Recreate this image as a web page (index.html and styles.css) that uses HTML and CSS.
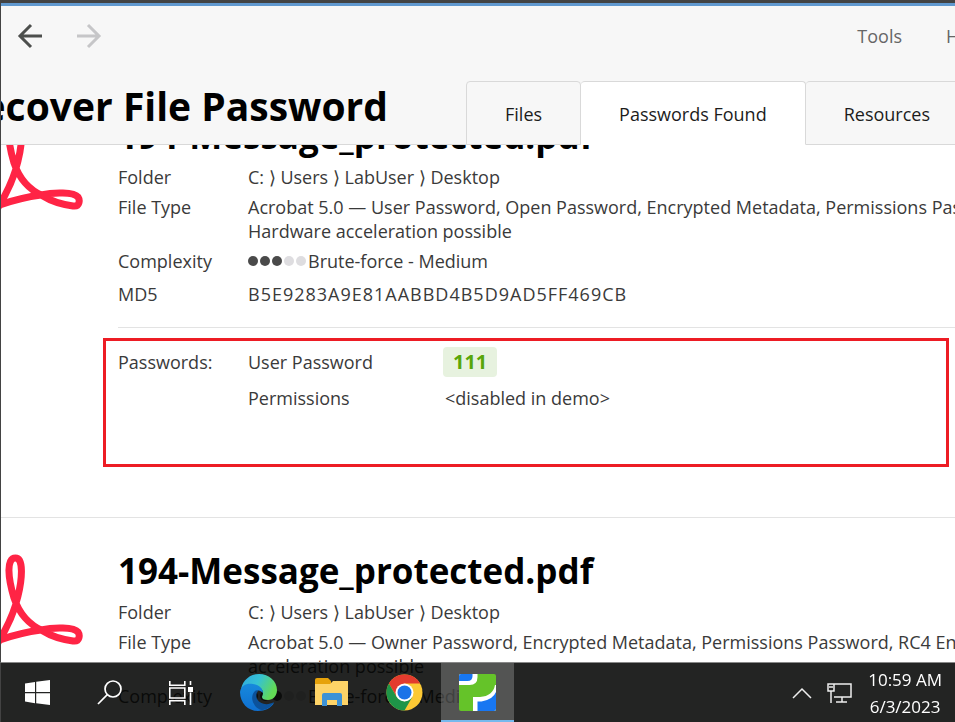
FILE: index.html
```html
<!DOCTYPE html>
<html lang="en">
<head>
<meta charset="utf-8">
<title>Recover File Password</title>
<link rel="stylesheet" href="styles.css">
</head>
<body>
<div class="window">
  <header class="header">
    <div class="toolbar">
      <button class="nav" aria-label="Back"><svg width="26" height="26" viewBox="0 0 26 26"><path d="M25 13H3M14 2L3 13l11 11"/></svg></button>
      <button class="nav" aria-label="Forward" disabled><svg width="26" height="26" viewBox="0 0 26 26"><path d="M0 13h22M11 2l11 11-11 11"/></svg></button>
      <nav class="menu"><a href="#tools">Tools</a><a href="#help">Help</a></nav>
    </div>
    <div class="titlebar">
      <h1><span>Recover File Password</span></h1>
      <nav class="tabs">
        <a class="tab" href="#files">Files</a>
        <a class="tab tab-active" href="#found">Passwords Found</a>
        <a class="tab" href="#resources">Resources</a>
      </nav>
    </div>
  </header>

  <main class="viewport">
    <div class="list">
      <article class="card">
        <svg class="pdf" viewBox="0 0 84 92"><use href="#acrobat"/></svg>
        <div class="info">
          <h2>194-Message_protected.pdf</h2>
          <dl>
            <dt>Folder</dt><dd>C: ⟩ Users ⟩ LabUser ⟩ Desktop</dd>
            <dt>File Type</dt><dd>Acrobat 5.0 — User Password, Open Password, Encrypted Metadata, Permissions Password<br>Hardware acceleration possible</dd>
            <dt>Complexity</dt><dd class="level"><i class="on"></i><i class="on"></i><i class="on"></i><i></i><i></i>Brute-force - Medium</dd>
            <dt class="hash-label">MD5</dt><dd class="hash">B5E9283A9E81AABBD4B5D9AD5FF469CB</dd>
          </dl>
          <hr>
          <section class="found">
            <span>Passwords:</span><span>User Password</span><span><b class="badge">111</b></span>
            <span></span><span>Permissions</span><span class="masked">&lt;disabled in demo&gt;</span>
          </section>
        </div>
      </article>
      <article class="card">
        <svg class="pdf" viewBox="0 0 84 92">
          <path id="acrobat" d="M-9 98C3 80 13 60 17 42C21 26 23 4 14.500 4C5 4 7 24 13 44C19 62 31 72 42 77C53 84 65 86 72 87C79 88 79 81 77 78C73 73 53 73 40 76C25 78 9 82 -7 88"/>
        </svg>
        <div class="info">
          <h2>194-Message_protected.pdf</h2>
          <dl>
            <dt>Folder</dt><dd>C: ⟩ Users ⟩ LabUser ⟩ Desktop</dd>
            <dt>File Type</dt><dd>Acrobat 5.0 — Owner Password, Encrypted Metadata, Permissions Password, RC4 Encryption, Hardware<br>acceleration possible</dd>
            <dt>Complexity</dt><dd class="level"><i class="on"></i><i class="on"></i><i class="on"></i><i></i><i></i>Brute-force - Medium</dd>
          </dl>
        </div>
      </article>
    </div>
  </main>
</div>

<footer class="taskbar">
  <button class="task" aria-label="Start"><svg width="25" height="25" viewBox="0 0 25 25" fill="#fff"><path d="M0 3.500L10 2v10H0zM11.200 1.800L25 0v12H11.200zM0 13.200h10v10L0 21.600zM11.200 13.200H25V25l-13.800-1.800z"/></svg></button>
  <button class="task" aria-label="Search"><svg width="25" height="25" viewBox="0 0 25 25" fill="none" stroke="#fff" stroke-width="1.700"><circle cx="16" cy="9" r="8"/><path d="M10.300 14.700L1 24"/></svg></button>
  <button class="task" aria-label="Task view"><svg width="26" height="24" viewBox="0 0 26 24" fill="none" stroke="#fff" stroke-width="1.600"><path d="M1.800 0v4.200h15V0M1.800 24v-4.200h15V24M1.800 7h15v10h-15zM22.500 0v4M22.500 11.500V24"/><path d="M20 6h5v5h-5z" fill="#fff" stroke="none"/></svg></button>
  <button class="task app first" aria-label="Edge"><svg width="37" height="37" viewBox="0 0 37 37">
    <defs>
      <linearGradient id="sea" x1="0" y1="0" x2="1" y2=".4"><stop offset="0" stop-color="#2fa8e0"/><stop offset=".5" stop-color="#35c1d5"/><stop offset="1" stop-color="#62da55"/></linearGradient>
      <linearGradient id="deep" x1="0" y1="0" x2="0" y2="1"><stop offset="0" stop-color="#1789dc"/><stop offset="1" stop-color="#0f6fd0"/></linearGradient>
    </defs>
    <path d="M1 15C3 6 10 0 19 0c10 0 18 7 18 16 0 6-4 10-9 10-4 0-6-1-6-3 0-1 1-2 1-4 0-4-4-7-9-7-6 0-11 1-13 3z" fill="url(#sea)"/>
    <path d="M0 18C1 11 7 9 13 10c7 1 10 5 10 9-2-2-4-3-6-2-3 1-3 6-1 9 3 5 10 7 18 3-3 5-9 8-16 8C8 37 0 29 0 18z" fill="url(#deep)"/>
    <path d="M15 17c-3 3-4 8-1 13 2 4 6 6 9 6 5-1 9-4 11-8-7 4-14 2-17-3-1-3-1-6 1-8-1-1-2-1-3 0z" fill="#0c529b"/>
  </svg></button>
  <button class="task app" aria-label="File Explorer"><svg width="33" height="30" viewBox="0 0 33 30"><path d="M0 2q0-2 2-2h11l3 3v7H0z" fill="#e6a20a"/><path d="M0 6h15l3-3h15v24H0z" fill="#fdd367"/><path d="M7 17q0-2 2-2h16q2 0 2 2v11h-5v-6H12v6H7z" fill="#3d92d6"/></svg></button>
  <button class="task app" aria-label="Chrome"><svg width="37" height="37" viewBox="0 0 37 37"><circle cx="18.500" cy="18.500" r="18" fill="#fcc934"/><path d="M2.900 9.500A18 18 0 0 1 34.100 9.500H18.500l-7.800 13.500z" fill="#e33b2e"/><path d="M2.900 9.500A18 18 0 0 0 18.500 36.500L26.300 23l-7.800 4.500L10.700 23z" fill="#1e9548"/><circle cx="18.500" cy="18.500" r="9" fill="#fff"/><circle cx="18.500" cy="18.500" r="7" fill="#1a73e8"/></svg></button>
  <button class="task app current" aria-label="Passware Kit"><svg width="37" height="37" viewBox="0 0 37 37"><rect width="37" height="37" rx="2" fill="#65c329"/><path d="M0 2q0-2 2-2h16.500v3q0 8-8 8H0z" fill="#fff"/><path d="M0 2q0-2 2-2h11.500v2q0 5-5 5H0z" fill="#1877f2"/><path d="M14 37V23h7Q34 22 36 11h1v24q0 2-2 2z" fill="#fff"/><path d="M18.500 37V27.500h4Q34 25.500 37 18v17q0 2-2 2z" fill="#1877f2"/></svg></button>
  <div class="tray">
    <svg width="20" height="12" viewBox="0 0 20 12"><path d="M1 11l9-9 9 9"/></svg>
    <svg width="26" height="22" viewBox="0 0 26 22"><path d="M7 2h17v13H7M15 15v5M9 20h11M1 2h6v7H1zM4 9v12M2 5h4"/></svg>
    <time class="clock">10:59 AM<br>6/3/2023</time>
  </div>
</footer>
</body>
</html>
```

FILE: styles.css
```css
* { box-sizing: border-box; }

body {
  margin: 0;
  height: 100vh;
  overflow: hidden;
  background: #fff;
  color: #3a3a3a;
  font: 18px/24px "Open Sans", "Noto Sans", sans-serif;
}

h1, h2, dl, dd { margin: 0; }
a { color: inherit; text-decoration: none; }
button { padding: 0; border: 0; background: none; }

.window {
  display: flex;
  flex-direction: column;
  height: 100%;
  border-top: 3px solid #434343;
  border-left: 1px solid #434343;
}

/* Header */
.header {
  flex: none;
  border-top: 3px solid #6199cf;
  background: #f7f7f7;
  overflow: hidden;
}

.toolbar {
  display: flex;
  align-items: center;
  height: 60px;
  padding-left: 16px;
  gap: 34px;
}

.nav { display: flex; }
.nav path { fill: none; stroke: #4d4f4d; stroke-width: 3; }
.nav:disabled path { stroke: #c6c6c8; }

.menu {
  display: flex;
  gap: 44px;
  margin-left: auto;
  margin-right: -30px;
  color: #666;
}

.titlebar {
  display: flex;
  align-items: flex-end;
  margin-top: 15px;
}

.titlebar h1 {
  flex: none;
  display: flex;
  justify-content: flex-end;
  width: 465px;
  height: 64px;
  padding-right: 78px;
  overflow: hidden;
  border-bottom: 1px solid #d9d9d9;
  color: #000;
  font-size: 39px;
  line-height: 50px;
  white-space: nowrap;
}

.tabs { display: flex; flex: 1; }

.tab {
  flex: none;
  height: 64px;
  padding: 0 38px;
  border: 1px solid #d9d9d9;
  border-left-width: 0;
  border-radius: 4px 4px 0 0;
  color: #1c1c1c;
  line-height: 64px;
}
.tab:first-child { border-left-width: 1px; }
.tab:last-child { flex: 1 0 auto; }
.tab-active { background: #fff; border-bottom-color: #fff; }

/* File list */
.viewport { flex: 1; overflow: hidden; }
.list { margin-top: -63px; }

.card {
  display: flex;
  padding: 33px 0 50px;
  border-top: 1px solid #e3e3e3;
  white-space: nowrap;
}

.pdf {
  flex: none;
  width: 84px;
  height: 92px;
  margin: 3px 33px 0 0;
}
.pdf path, .pdf use { fill: none; stroke: #ff2445; stroke-width: 7; }

.info { flex: 1; min-width: 0; }

h2 {
  margin-bottom: 9px;
  color: #000;
  font-size: 35px;
  line-height: 40px;
}

dl {
  display: grid;
  grid-template-columns: 130px 1fr;
  row-gap: 6px;
}

.hash-label, .hash { margin-top: 3px; }
.hash { letter-spacing: 1px; }

.level { display: flex; align-items: center; gap: 2px; }
.level i { width: 10px; height: 10px; border-radius: 50%; background: #dedde0; }
.level .on { background: #4a4a4a; }

hr {
  margin: 21px 0 10px;
  border: 0;
  border-top: 1px solid #e3e3e3;
}

.found {
  display: grid;
  grid-template-columns: 130px 195px 1fr;
  row-gap: 6px;
  margin: 0 6px 0 -15px;
  padding: 6px 12px 51px;
  border: 3px solid #ed1c24;
  line-height: 30px;
}

.badge {
  display: inline-block;
  padding: 0 10px;
  border-radius: 4px;
  background: #e7f2df;
  color: #58a60a;
  font-size: 20px;
}
.masked { padding-left: 2px; }

/* Taskbar */
.taskbar {
  position: fixed;
  inset: auto 0 0 0;
  display: flex;
  height: 60px;
  border-left: 1px solid #434343;
  border-top: 1px solid #888;
  background: rgba(2, 4, 2, .87);
}

.task {
  display: flex;
  align-items: center;
  justify-content: center;
  width: 72px;
}
.app { width: 73px; }
.first { margin-left: 5px; }
.current {
  padding-top: 2px;
  border-bottom: 2px solid #76b9ed;
  background: rgba(255, 255, 255, .22);
}

.tray {
  display: flex;
  align-items: center;
  gap: 15px;
  margin-left: auto;
  padding-right: 13px;
  color: #fff;
}
.tray path { fill: none; stroke: #eee; stroke-width: 1.5; }
.clock {
  font-size: 17px;
  line-height: 27px;
  text-align: center;
}
```
